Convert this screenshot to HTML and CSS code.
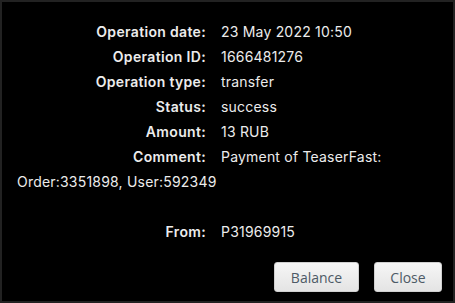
FILE: index.html
```
<!DOCTYPE html>
<html>
<head>
<meta charset="utf-8">
<link rel="stylesheet" href="styles.css">
</head>
<body>
<div class="dialog">
  <div class="info">
    <span class="lbl">Operation date:</span><span class="val">23 May 2022 10:50</span><br>
    <span class="lbl">Operation ID:</span><span class="val">1666481276</span><br>
    <span class="lbl">Operation type:</span><span class="val">transfer</span><br>
    <span class="lbl">Status:</span><span class="val">success</span><br>
    <span class="lbl">Amount:</span><span class="val">13 RUB</span><br>
    <span class="lbl">Comment:</span><span class="val">Payment of TeaserFast: Order:3351898, User:592349</span><br>
    <br>
    <span class="lbl">From:</span><span class="val">P31969915</span>
  </div>
  <div class="actions">
    <button class="btn btn-balance">Balance</button>
    <button class="btn btn-close">Close</button>
  </div>
</div>
</body>
</html>
```
FILE: styles.css
```
html, body {
  margin: 0;
  padding: 0;
  background: #000;
}
.dialog {
  box-sizing: border-box;
  width: 455px;
  height: 303px;
  border: 2px solid #222;
  background: #000;
  padding: 17px 11px 0 15px;
  display: flex;
  flex-direction: column;
}
.info {
  font-family: Inter, "Noto Sans", sans-serif;
  font-size: 14px;
  line-height: 25px;
  color: #ececec;
}
.lbl {
  display: inline-block;
  width: 189px;
  text-align: right;
  font-weight: 600;
  letter-spacing: 0.33px;
  margin-right: 15px;
}
.val {
  letter-spacing: 0.2px;
}
.actions {
  display: flex;
  justify-content: flex-end;
  gap: 15px;
  margin-top: 18px;
}
.btn {
  font-family: "Open Sans", "Liberation Sans", sans-serif;
  font-size: 14px;
  color: #4d5a66;
  height: 30px;
  padding: 0 10px;
  border: 1px solid #d0d0d0;
  border-radius: 3px;
  background: linear-gradient(#f6f6f6, #e4e4e4);
}
.btn-balance { width: 85px; }
.btn-close { width: 68px; }
```
